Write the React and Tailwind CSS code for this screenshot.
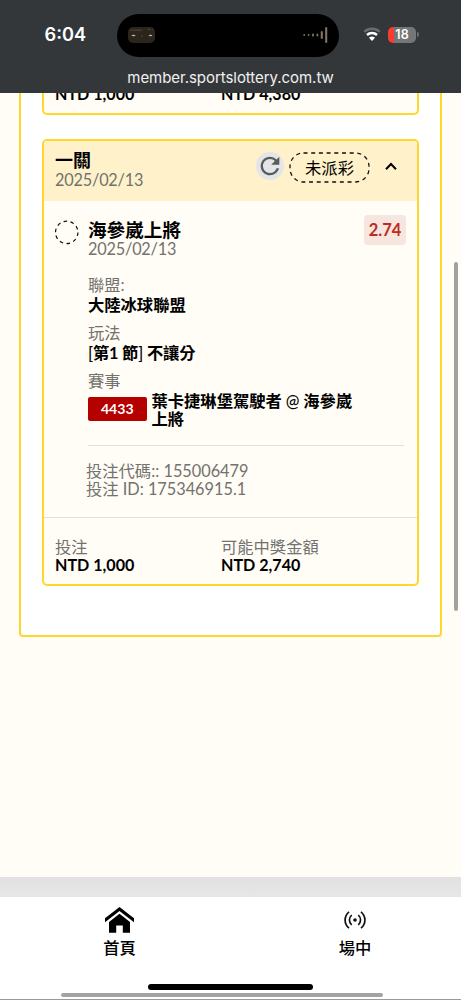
import React from "react";
import { MdRefresh } from "react-icons/md";

function StatusBar() {
  return (
    <header className="h-[93px] shrink-0 bg-[#34373a] text-white">
      <div className="flex h-[69px] items-center">
        <div className="w-[117px] pl-[44.5px] font-['Inter','Liberation_Sans',sans-serif] text-[18.2px] font-semibold">
          6:04
        </div>
        <div className="mt-px flex h-[43px] w-[222px] items-center justify-between rounded-full bg-black pl-[11px] pr-[11px]">
          <svg className="h-[16px] w-[27px]" viewBox="0 0 27 16">
            <rect width="27" height="16" rx="5" fill="#2b251b" />
            <path d="M2 3.2h12M20 2.5h2M24 2h1" stroke="#686052" strokeWidth="0.6" />
            <ellipse cx="5.5" cy="8.5" rx="2" ry="0.8" fill="#bdb7aa" />
            <ellipse cx="22.5" cy="8.5" rx="1.8" ry="0.8" fill="#bdb7aa" />
            <circle cx="14" cy="9" r="0.5" fill="#81786a" />
          </svg>
          <svg className="h-[18px] w-[26px]" viewBox="0 0 26 18" stroke="#81745f" strokeLinecap="round">
            <path d="M2.2 9v.1M6.6 9v.1M11 8.3v1.4M15.4 8.5v1" strokeWidth="1.8" />
            <path d="M19.800 6v6M24.200 2v14" strokeWidth="2.1" />
          </svg>
        </div>
        <svg className="ml-[24px] h-[15px] w-[18px]" viewBox="0 0 18 15" fill="none">
          <path d="M1.2 4.9C5.6.8 12.4.8 16.8 4.9" stroke="#6a6d70" strokeWidth="2.5" />
          <path d="M4 8C6.8 5.4 11.2 5.4 14 8" stroke="#fff" strokeWidth="2.5" />
          <path d="M6 10.7c1.7-1.6 4.3-1.6 6 0l-3 3.2z" fill="#fff" />
        </svg>
        <div className="ml-[7px] flex h-[16px] w-[28px] items-center justify-center overflow-hidden rounded-[5px] bg-gradient-to-r from-[#fc3b30] from-[20%] to-[#747678] to-[20%] font-['Inter',sans-serif] text-[12.5px] font-semibold leading-[16px]">
          18
        </div>
        <div className="ml-px h-[5px] w-[1.5px] rounded-r bg-[#6c6e70]" />
      </div>
      <div className="text-center font-['Inter','Liberation_Sans',sans-serif] text-[15px] leading-[17px] tracking-[-0.05px] text-[#f0f0f0]">
        member.sportslottery.com.tw
      </div>
    </header>
  );
}

function Field({ label, value }) {
  return (
    <div className="mb-[8px]">
      <div className="leading-[20px] text-[#73726e]">{label}</div>
      <div className="font-bold leading-[20px]">{value}</div>
    </div>
  );
}

function Amount({ label, value, className }) {
  return (
    <div className={className}>
      <div className="leading-[20px] text-[#73726e]">{label}</div>
      <div className="text-[16.1px] font-bold leading-[16px]">{value}</div>
    </div>
  );
}

function BetCard() {
  return (
    <section className="mt-[24px] h-[447px] overflow-hidden rounded-[5px] border-[2px] border-[#ffd62c] bg-[#fffdf5]">
      <div className="flex h-[60px] bg-[#fff2cb] pl-[11px]">
        <div className="w-[201px] pt-[9px]">
          <div className="text-[18px] font-bold leading-[20px]">一關</div>
          <div className="text-[16.3px] leading-[19px] tracking-[-0.2px] text-[#73726e]">2025/02/13</div>
        </div>
        <div className="mt-[11px] flex size-[28px] items-center justify-center rounded-full bg-[#e4e5e7]">
          <MdRefresh className="size-[28px] shrink-0 text-[#5a5b5d]" />
        </div>
        <div className="relative ml-[5px] mt-[10.500px] flex h-[31px] w-[81px] items-center justify-center">
          <svg className="absolute inset-0 h-[31px] w-[81px]" viewBox="0 0 81 31" fill="none">
            <rect x="1" y="1" width="79" height="29" rx="13.5" stroke="#111" strokeWidth="1.3" strokeDasharray="4 3.7" />
          </svg>
          <span className="mt-[1px] text-[16.3px] leading-[20px]">未派彩</span>
        </div>
        <svg className="ml-[15px] mt-[21px] h-[9px] w-[12px]" viewBox="0 0 12 9" fill="none">
          <path d="M1 7.2 6 2l5 5.2" stroke="#000" strokeWidth="2" />
        </svg>
      </div>
      <div className="flex h-[317px] border-b border-[#e3e1dc] pl-[11px]">
        <svg className="mt-[19px] h-[25px] w-[25px] shrink-0" viewBox="0 0 25 25" fill="none">
          <circle cx="11.700" cy="12.4" r="11.2" stroke="#111" strokeWidth="1.2" strokeDasharray="3.6 3.44" />
        </svg>
        <div className="ml-[8px] w-[316px]">
          <div className="flex h-[74px] justify-between pt-[19px]">
            <div>
              <div className="text-[18.6px] font-bold leading-[21px]">海參崴上將</div>
              <div className="-mt-px text-[16.3px] leading-[18px] tracking-[-0.2px] text-[#73726e]">2025/02/13</div>
            </div>
            <div className="-mr-[2px] -mt-[5px] flex h-[30px] w-[42px] items-center justify-center rounded-[4px] bg-[#f7e6df] pt-px text-[16.500px] font-bold text-[#bd2b21]">
              2.74
            </div>
          </div>
          <Field label="聯盟:" value="大陸冰球聯盟" />
          <Field
            label="玩法"
            value={
              <span className="tracking-[-0.15px]">
                <span className="font-medium">[</span>第1 節<span className="font-medium">]</span> 不讓分
              </span>
            }
          />
          <div className="leading-[20px] text-[#73726e]">賽事</div>
          <div className="flex h-[55px] border-b border-[#e3e1dc]">
            <div className="mt-[6px] flex h-[23.5px] w-[58.5px] items-center justify-center rounded-[2px] bg-[#b50000] text-[14.1px] font-bold text-white">
              4433
            </div>
            <div className="ml-[5px] w-[204px] pt-[1px] font-bold leading-[17.7px]">
              葉卡捷琳堡駕駛者 <span className="font-medium">@</span> 海參崴上將
            </div>
          </div>
          <div className="-ml-[2px] pt-[16px] leading-[18px] text-[#73726e]">
            <div>投注代碼:: 155006479</div>
            <div>投注 ID: 175346915.1</div>
          </div>
        </div>
      </div>
      <div className="flex pl-[11px] pt-[19px]">
        <Amount className="w-[166px]" label="投注" value="NTD 1,000" />
        <Amount label="可能中獎金額" value="NTD 2,740" />
      </div>
    </section>
  );
}

function HomeIcon() {
  return (
    <svg className="h-[26px] w-[29px]" viewBox="0 0 29 26">
      <path d="M14.5 0 29 11.3v4L14.5 4 0 15.300v-4z" />
      <path d="M14.500 6.800 25 15v10.700h-7.200v-7.200h-6.600v7.200H4V15z" />
    </svg>
  );
}

function LiveIcon() {
  return (
    <svg className="h-[18px] w-[22px]" viewBox="0 0 22 18" fill="none" stroke="#111" strokeWidth="1.7">
      <path d="M5 .8C-.2 5.200-.2 12.800 5 17.200M17 .8c5.200 4.400 5.200 12 0 16.400" />
      <path d="M7.700 4c-3 2.800-3 7.200 0 10M14.300 4c3 2.800 3 7.200 0 10" />
      <circle cx="11" cy="9" r="1.800" fill="#111" stroke="none" />
    </svg>
  );
}

function Tab({ icon, label, className }) {
  return (
    <div className={`flex flex-col items-center ${className}`}>
      <div className="flex h-[27px] items-center">{icon}</div>
      <div className="mt-[5px] text-[16.3px] font-medium leading-[20px]">{label}</div>
    </div>
  );
}

export default function App() {
  return (
    <div className="flex h-[1000px] w-[461px] flex-col overflow-hidden bg-white font-['Lato','Noto_Sans_CJK_TC',sans-serif] text-[16.3px] text-black">
      <StatusBar />
      <main className="relative h-[784px] shrink-0 overflow-hidden bg-[#fffdf5] pl-[19px]">
        <div className="h-[544px] w-[423px] rounded-b-[4px] border-x-[2px] border-b-[2px] border-[#ffd62c] bg-white px-[21px]">
          <section className="h-[22px] overflow-hidden rounded-b-[5px] border-x-[2px] border-b-[2px] border-[#ffd62c] bg-[#fffdf5]">
            <div className="-mt-[7px] flex pl-[11px] text-[16.1px] font-bold leading-[16px]">
              <div className="w-[166px]">NTD 1,000</div>
              <div>NTD 4,380</div>
            </div>
          </section>
          <BetCard />
        </div>
        <div className="absolute left-[454px] top-[169px] h-[349px] w-[3.500px] rounded-full bg-[#a3a29c]" />
      </main>
      <div className="h-[20px] shrink-0 bg-gradient-to-b from-[#e1e1e1] to-[#e7e7e7]" />
      <nav className="relative h-[103px] shrink-0 bg-white">
        <div className="flex pt-[9px]">
          <Tab className="w-[239px] shrink-0" icon={<HomeIcon />} label="首頁" />
          <Tab className="w-[232px] shrink-0" icon={<LiveIcon />} label="場中" />
        </div>
        <div className="absolute bottom-[10px] left-[148px] h-[6px] w-[165px] rounded-full bg-black" />
        <div className="absolute bottom-[3.500px] left-[61px] h-[3.500px] w-[322px] rounded-full bg-[#a3a3a3]" />
        <div className="absolute bottom-0 left-0 h-px w-full bg-[#999]" />
      </nav>
    </div>
  );
}
